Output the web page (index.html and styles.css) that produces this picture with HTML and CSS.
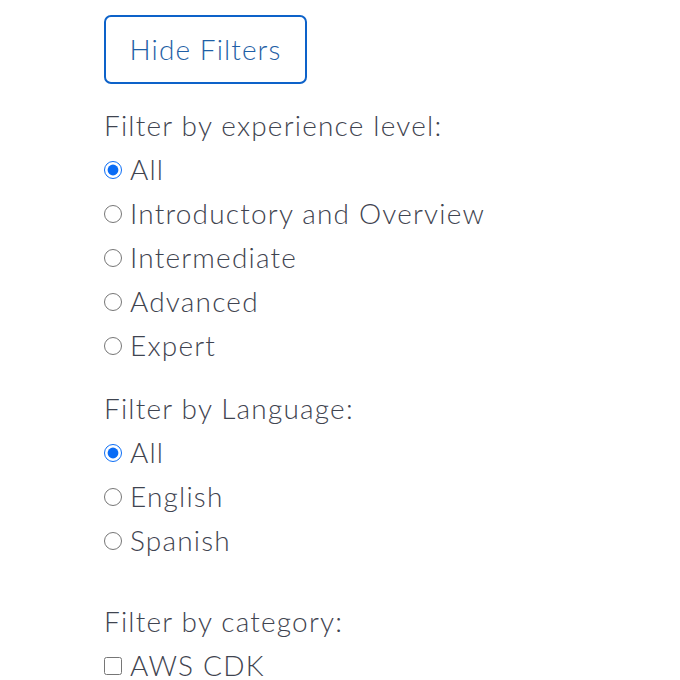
FILE: index.html
```html
<!DOCTYPE html>
<html lang="en">
<head>
    <meta charset="UTF-8">
    <meta name="viewport" content="width=device-width, initial-scale=1.0">
    <title>Filters</title>
    <link rel="stylesheet" href="styles.css">
</head>
<body>
    <div class="container">
        <button class="toggle-btn">Hide Filters</button>

        <div class="filter-group">
            <div class="filter-title">Filter by experience level:</div>
            <label class="option"><input type="radio" name="level" checked> All</label>
            <label class="option"><input type="radio" name="level"> Introductory and Overview</label>
            <label class="option"><input type="radio" name="level"> Intermediate</label>
            <label class="option"><input type="radio" name="level"> Advanced</label>
            <label class="option"><input type="radio" name="level"> Expert</label>
        </div>

        <div class="filter-group">
            <div class="filter-title">Filter by Language:</div>
            <label class="option"><input type="radio" name="lang" checked> All</label>
            <label class="option"><input type="radio" name="lang"> English</label>
            <label class="option"><input type="radio" name="lang"> Spanish</label>
        </div>

        <div class="filter-group category">
            <div class="filter-title">Filter by category:</div>
            <label class="option"><input type="checkbox"> AWS CDK</label>
        </div>
    </div>
</body>
</html>
```

FILE: styles.css
```css
body {
    font-family: Lato, "Open Sans", sans-serif;
    margin: 0;
    padding: 0;
    background-color: #ffffff;
    color: #3f4450;
}
.container {
    padding: 15px 0 0 104px;
}
.toggle-btn {
    font-family: inherit;
    font-size: 28px;
    font-weight: 300;
    letter-spacing: 1.1px;
    color: #1f5fa6;
    background: #ffffff;
    border: 2px solid #0d62c9;
    border-radius: 7px;
    width: 203px;
    height: 69px;
    padding: 0 0 2px;
    cursor: pointer;
    margin-bottom: 20px;
}
.filter-group {
    margin-bottom: 19px;
}
.filter-group.category {
    margin-top: 37px;
}
.filter-title,
.option {
    display: flex;
    align-items: center;
    box-sizing: border-box;
    height: 44px;
    padding-bottom: 2px;
    font-size: 28px;
    font-weight: 300;
    letter-spacing: 1.2px;
}
.option input {
    width: 18px;
    height: 18px;
    margin: 2px 8px 0 0;
    accent-color: #0a6cf5;
}
```
